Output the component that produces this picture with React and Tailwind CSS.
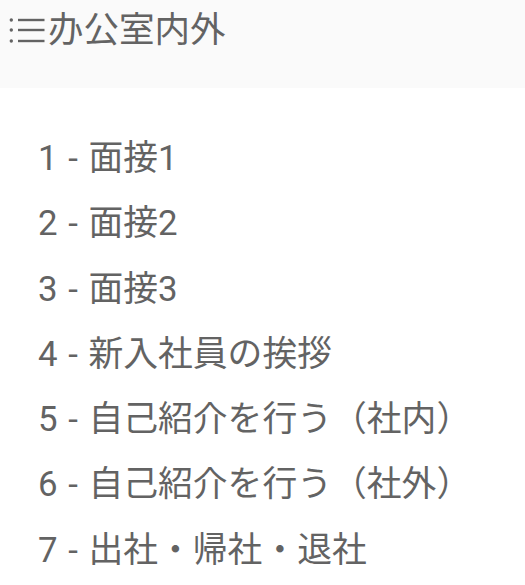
export default function App() {
    const items = [
        '1 - 面接1',
        '2 - 面接2',
        '3 - 面接3',
        '4 - 新入社員の挨拶',
        '5 - 自己紹介を行う（社内）',
        '6 - 自己紹介を行う（社外）',
        '7 - 出社・帰社・退社',
    ];

    return (
        <div
            className="min-h-[585px] w-[525px] bg-white text-[#636363]"
            style={{ fontFamily: 'Roboto, "Noto Sans CJK JP", sans-serif' }}
        >
            {/* Header */}
            <div className="h-[88px] bg-[#fafafa]">
                <div className="flex h-[60px] items-center">
                    <svg width="48" height="30" viewBox="0 0 48 30" className="shrink-0">
                        <g fill="#636363">
                            <circle cx="11.3" cy="5" r="1.7" />
                            <circle cx="11.3" cy="15" r="1.7" />
                            <circle cx="11.3" cy="26" r="1.7" />
                        </g>
                        <g stroke="#636363" strokeWidth="2.4">
                            <line x1="18" y1="5" x2="44.5" y2="5" />
                            <line x1="18" y1="15" x2="44.5" y2="15" />
                            <line x1="18" y1="26" x2="44.5" y2="26" />
                        </g>
                    </svg>
                    <span className="text-[35.5px] leading-[60px]">办公室内外</span>
                </div>
            </div>

            {/* List */}
            <ul className="pl-[38px] pt-[40px]">
                {items.map((item) => (
                    <li key={item} className="h-[65.3px] text-[34.8px] leading-[60px] [word-spacing:2px]">
                        {item}
                    </li>
                ))}
            </ul>
        </div>
    );
}
